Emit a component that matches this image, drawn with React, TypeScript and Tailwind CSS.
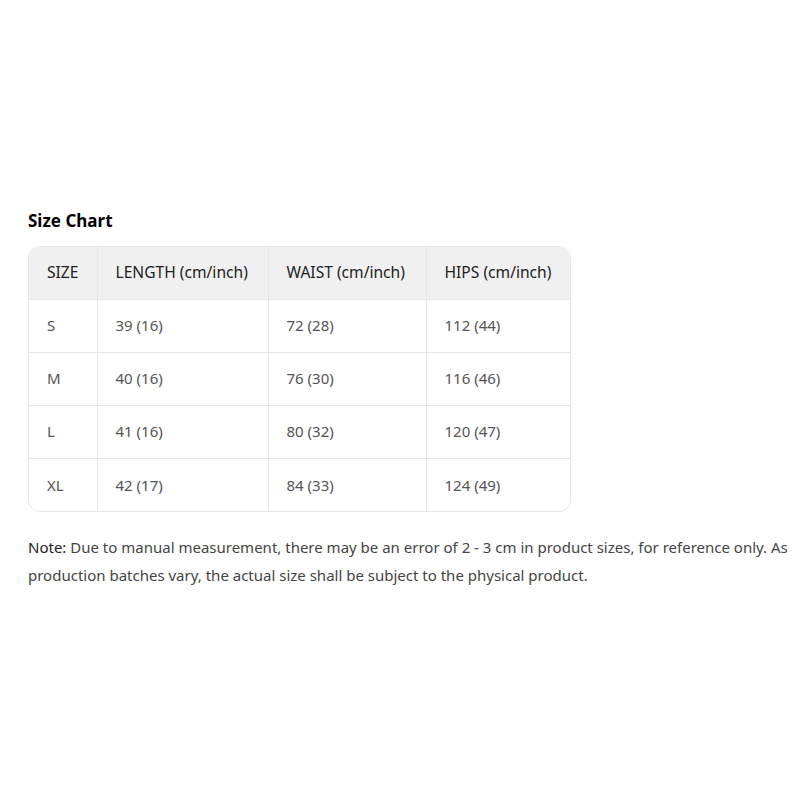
import React from "react";

const rows = [
  ["S", "39 (16)", "72 (28)", "112 (44)"],
  ["M", "40 (16)", "76 (30)", "116 (46)"],
  ["L", "41 (16)", "80 (32)", "120 (47)"],
  ["XL", "42 (17)", "84 (33)", "124 (49)"],
];

export default function App() {
  return (
    <div
      className="w-[799px] h-[799px] bg-white flex flex-col justify-center pl-[28px] pr-[4px] pb-[1px]"
      style={{ fontFamily: '"Noto Sans", "Open Sans", sans-serif' }}
    >
      <h2 className="text-[17px] font-bold text-black leading-[24px] mb-[13px]">Size Chart</h2>
      <div className="w-[543px] border border-[#e6e6e6] rounded-[12px] overflow-hidden">
        <table className="w-full border-collapse text-[15px]">
          <colgroup>
            <col className="w-[68px]" />
            <col className="w-[171px]" />
            <col className="w-[158px]" />
            <col />
          </colgroup>
          <thead>
            <tr className="bg-[#f0f0f0] h-[52px]">
              {["SIZE", "LENGTH (cm/inch)", "WAIST (cm/inch)", "HIPS (cm/inch)"].map((h, i) => (
                <th
                  key={h}
                  className={`text-left font-normal text-[15.6px] text-[#222] pl-[18px] ${i > 0 ? "border-l border-[#e6e6e6]" : ""}`}
                >
                  {h}
                </th>
              ))}
            </tr>
          </thead>
          <tbody>
            {rows.map((r) => (
              <tr key={r[0]} className="h-[53px] border-t border-[#e6e6e6]">
                {r.map((c, i) => (
                  <td
                    key={i}
                    className={`text-[#555] pl-[18px] ${i > 0 ? "border-l border-[#e6e6e6]" : ""}`}
                  >
                    {c}
                  </td>
                ))}
              </tr>
            ))}
          </tbody>
        </table>
      </div>
      <p className="mt-[21px] text-[15px] leading-[28px] text-[#444]">
        <span className="text-[#222]">Note:</span> Due to manual measurement, there may be an error of 2 - 3 cm in product sizes, for reference only. As production batches vary, the actual size shall be subject to the physical product.
      </p>
    </div>
  );
}
